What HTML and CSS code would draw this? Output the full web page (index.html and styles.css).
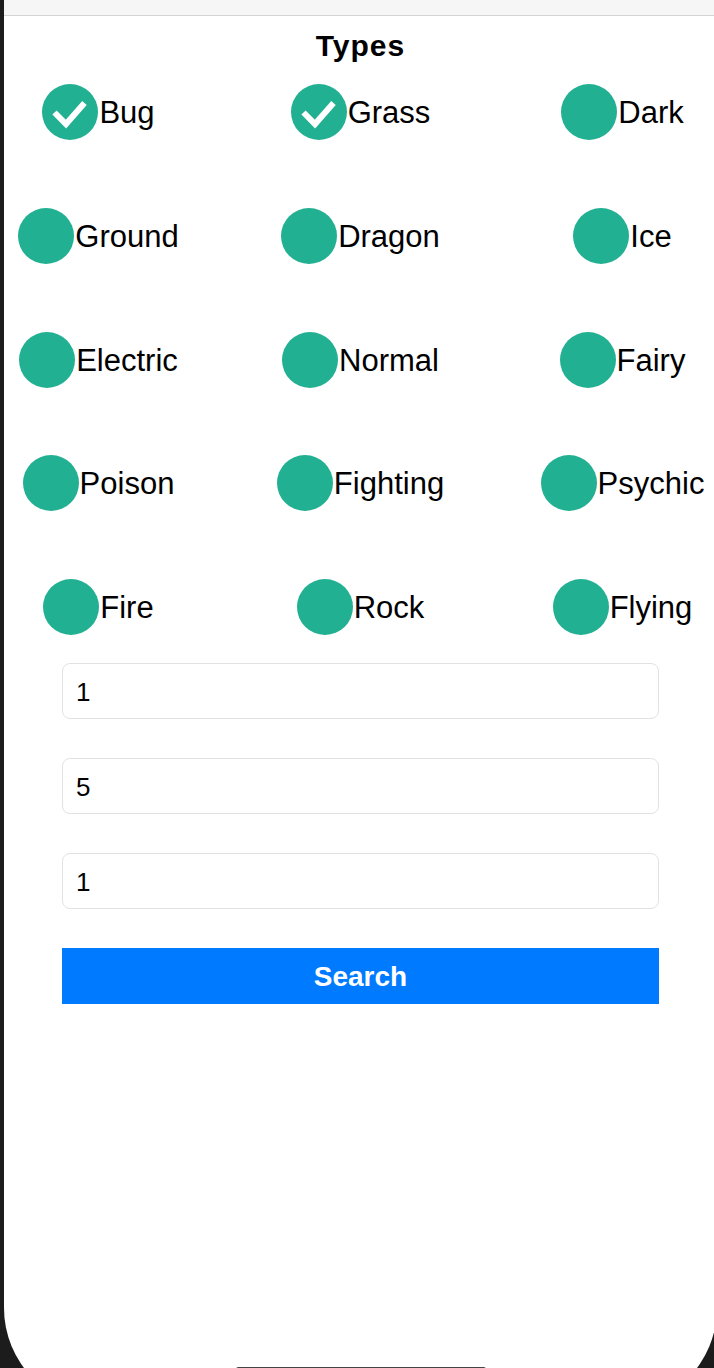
FILE: index.html
```html
<!DOCTYPE html>
<html lang="en">
<head>
<meta charset="utf-8">
<title>Types</title>
<link rel="stylesheet" href="styles.css">
</head>
<body>
<div class="screen">
  <div class="topbar"></div>
  <h1 class="title">Types</h1>
  <div class="types">
    <label class="type"><span class="check on"><svg viewBox="0 0 56 56" width="56" height="56"><path d="M12.5 28.5 L24 40 L42.5 19" fill="none" stroke="#fff" stroke-width="6" stroke-linecap="butt" stroke-linejoin="miter"/></svg></span><span class="name">Bug</span></label>
    <label class="type"><span class="check on"><svg viewBox="0 0 56 56" width="56" height="56"><path d="M12.5 28.5 L24 40 L42.5 19" fill="none" stroke="#fff" stroke-width="6" stroke-linecap="butt" stroke-linejoin="miter"/></svg></span><span class="name">Grass</span></label>
    <label class="type"><span class="check"></span><span class="name">Dark</span></label>
    <label class="type"><span class="check"></span><span class="name">Ground</span></label>
    <label class="type"><span class="check"></span><span class="name">Dragon</span></label>
    <label class="type"><span class="check"></span><span class="name">Ice</span></label>
    <label class="type"><span class="check"></span><span class="name">Electric</span></label>
    <label class="type"><span class="check"></span><span class="name">Normal</span></label>
    <label class="type"><span class="check"></span><span class="name">Fairy</span></label>
    <label class="type"><span class="check"></span><span class="name">Poison</span></label>
    <label class="type"><span class="check"></span><span class="name">Fighting</span></label>
    <label class="type"><span class="check"></span><span class="name">Psychic</span></label>
    <label class="type"><span class="check"></span><span class="name">Fire</span></label>
    <label class="type"><span class="check"></span><span class="name">Rock</span></label>
    <label class="type"><span class="check"></span><span class="name">Flying</span></label>
  </div>
  <div class="form">
    <div class="field">1</div>
    <div class="field">5</div>
    <div class="field">1</div>
    <div class="button">Search</div>
  </div>
  <div class="home-indicator"></div>
</div>
</body>
</html>
```

FILE: styles.css
```css
html, body {
  margin: 0;
  padding: 0;
}
body {
  background: #1c1c1c;
  overflow: hidden;
  height: 1368px;
  font-family: "Liberation Sans", Arial, sans-serif;
  color: #000;
}
.screen {
  position: relative;
  margin-left: 4px;
  width: 713px;
  height: 1408px;
  background: #fff;
  border-radius: 0 0 100px 100px;
  overflow: hidden;
}
.topbar {
  height: 15px;
  background: #f6f6f6;
  border-bottom: 1px solid #d4d4d4;
}
.title {
  margin: 13px 0 21px;
  height: 34px;
  line-height: 34px;
  font-size: 30px;
  font-weight: bold;
  letter-spacing: 1px;
  text-align: center;
}
.types {
  display: grid;
  grid-template-columns: 189px 335px 189px;
  grid-auto-rows: 56px;
  row-gap: 67.75px;
  justify-items: center;
}
.type {
  display: flex;
  align-items: center;
  gap: 1px;
  white-space: nowrap;
}
.check {
  width: 56px;
  height: 56px;
  border-radius: 50%;
  background: #22b092;
  flex: none;
  display: block;
}
.check svg {
  display: block;
}
.name {
  font-size: 31px;
  line-height: 36px;
  padding-top: 2px;
}
.form {
  margin-top: 28px;
  padding: 0 58px;
  display: flex;
  flex-direction: column;
  gap: 39px;
}
.field {
  height: 54px;
  border: 1px solid #e2e2e2;
  border-radius: 8px;
  padding: 0 13px;
  font-size: 26px;
  line-height: 56px;
}
.button {
  height: 56px;
  background: #007aff;
  color: #fff;
  font-weight: bold;
  font-size: 28px;
  line-height: 58px;
  text-align: center;
}
.home-indicator {
  position: absolute;
  left: 232px;
  top: 1367px;
  width: 250px;
  height: 5px;
  border-radius: 3px;
  background: #454545;
}
```
